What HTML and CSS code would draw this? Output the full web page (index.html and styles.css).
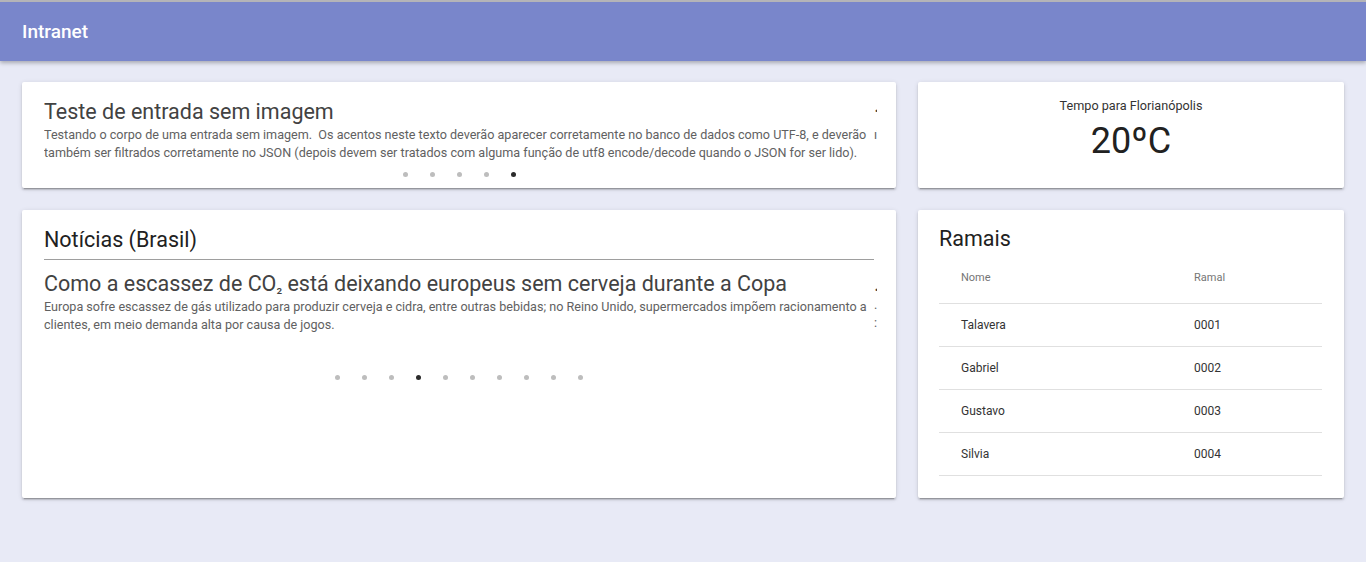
FILE: index.html
```html
<!DOCTYPE html>
<html lang="pt-BR">
<head>
<meta charset="utf-8">
<title>Intranet</title>
<link rel="stylesheet" href="styles.css">
</head>
<body>
<header class="topbar">
  <span class="brand">Intranet</span>
</header>
<main class="grid">
  <section class="card card-posts">
    <div class="carousel">
      <div class="track">
        <article class="slide">
          <h2 class="slide-title">Teste de entrada sem imagem</h2>
          <p class="slide-text">Testando o corpo de uma entrada sem imagem.&nbsp; Os acentos neste texto deverão aparecer corretamente no banco de dados como UTF-8, e deverão também ser filtrados corretamente no JSON (depois devem ser tratados com alguma função de utf8 encode/decode quando o JSON for ser lido).</p>
        </article>
        <article class="slide">
          <h2 class="slide-title">·Teste de entrada</h2>
          <p class="slide-text">ıTestando o corpo de outra entrada.</p>
        </article>
      </div>
    </div>
    <div class="dots">
      <span class="dot"></span><span class="dot"></span><span class="dot"></span><span class="dot"></span><span class="dot active"></span>
    </div>
  </section>

  <section class="card card-weather">
    <div class="weather-label">Tempo para Florianópolis</div>
    <div class="weather-temp">20ºC</div>
  </section>

  <section class="card card-news">
    <h2 class="card-title">Notícias (Brasil)</h2>
    <hr class="rule">
    <div class="carousel carousel-news">
      <div class="track">
        <article class="slide">
          <h3 class="slide-title">Como a escassez de CO<span class="sub">₂</span> está deixando europeus sem cerveja durante a Copa</h3>
          <p class="slide-text">Europa sofre escassez de gás utilizado para produzir cerveja e cidra, entre outras bebidas; no Reino Unido, supermercados impõem racionamento a clientes, em meio demanda alta por causa de jogos.</p>
        </article>
        <article class="slide">
          <h3 class="slide-title">.Governo anuncia</h3>
          <p class="slide-text">.Medida deve</p>
          <p class="slide-text">:valer</p>
        </article>
      </div>
    </div>
    <div class="dots dots-news">
      <span class="dot"></span><span class="dot"></span><span class="dot"></span><span class="dot active"></span><span class="dot"></span><span class="dot"></span><span class="dot"></span><span class="dot"></span><span class="dot"></span><span class="dot"></span>
    </div>
  </section>

  <section class="card card-ramais">
    <h2 class="card-title">Ramais</h2>
    <table class="ramais">
      <thead>
        <tr><th class="col-nome">Nome</th><th>Ramal</th></tr>
      </thead>
      <tbody>
        <tr><td>Talavera</td><td>0001</td></tr>
        <tr><td>Gabriel</td><td>0002</td></tr>
        <tr><td>Gustavo</td><td>0003</td></tr>
        <tr><td>Silvia</td><td>0004</td></tr>
      </tbody>
    </table>
  </section>
</main>
</body>
</html>
```

FILE: styles.css
```css
* { box-sizing: border-box; }

body {
  margin: 0;
  background: #e8eaf6;
  font-family: Roboto, "Noto Sans", "DejaVu Sans", sans-serif;
  color: #212121;
}

.topbar {
  height: 61px;
  background: #7986cb;
  border-top: 2px solid #b4b4b8;
  box-shadow: 0 2px 4px rgba(0, 0, 0, 0.28);
  display: flex;
  align-items: center;
  padding: 0 22px;
  position: relative;
  z-index: 1;
}

.brand {
  color: #ffffff;
  font-size: 19px;
  font-weight: 500;
}

.grid {
  display: grid;
  grid-template-columns: 874px 426px;
  grid-template-rows: 106px 288px;
  gap: 22px;
  padding: 21px 22px;
}

.card {
  background: #ffffff;
  border-radius: 2px;
  box-shadow: 0 2px 2px rgba(0, 0, 0, 0.14), 0 1px 5px rgba(0, 0, 0, 0.12), 0 3px 1px -2px rgba(0, 0, 0, 0.2);
}

.card-posts {
  padding: 17px 22px 0;
}

.carousel {
  overflow: hidden;
  margin-right: -3px;
}

.track {
  display: flex;
}

.slide {
  flex: 0 0 830px;
  width: 830px;
}

.slide-title {
  margin: 0;
  font-size: 21.5px;
  line-height: 26px;
  font-weight: 400;
  color: #424242;
  white-space: nowrap;
}

.sub {
  font-size: 0.72em;
}

.slide-text {
  margin: 1px 0 0;
  font-size: 12.6px;
  line-height: 18px;
  color: #616161;
}

.carousel-news .slide-text {
  margin-top: -1px;
}

.carousel-news .slide-text + .slide-text {
  margin-top: 0;
}

.dots {
  display: flex;
  justify-content: center;
  gap: 22px;
  margin-top: 10px;
  height: 5px;
}

.dot {
  width: 5px;
  height: 5px;
  border-radius: 50%;
  background: #bdbdbd;
}

.dot.active {
  background: #2b2b2b;
}

.card-weather {
  text-align: center;
  padding-top: 15px;
}

.weather-label {
  font-size: 12.65px;
  line-height: 18px;
  color: #333333;
}

.weather-temp {
  margin-top: 5px;
  font-size: 36px;
  line-height: 42px;
  color: #212121;
}

.card-news {
  padding: 17px 22px 0;
}

.card-title {
  margin: 0;
  font-size: 21.5px;
  line-height: 26px;
  font-weight: 400;
  color: #212121;
}

.rule {
  margin: 6px 0 0;
  border: 0;
  border-top: 1px solid #9e9e9e;
}

.carousel-news {
  margin-top: 11px;
}

.dots-news {
  margin-top: 41px;
}

.card-ramais {
  padding: 16px 22px 0 21px;
}

.ramais {
  width: 100%;
  border-collapse: collapse;
}

.ramais th,
.ramais td {
  text-align: left;
  padding: 0 0 0 22px;
  vertical-align: middle;
  border-bottom: 1px solid #e0e0e0;
}

.ramais th {
  height: 51px;
  font-size: 11px;
  font-weight: 400;
  color: #757575;
}

.ramais .col-nome {
  width: 233px;
}

.ramais td {
  height: 43px;
  font-size: 12px;
  color: #333333;
}
```
